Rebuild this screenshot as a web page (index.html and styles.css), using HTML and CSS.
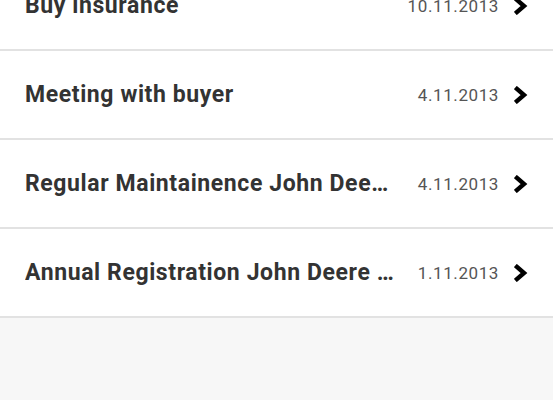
FILE: index.html
```html
<!doctype html>
<html lang="en-US">
<head>
    <meta name="viewport" content="width=device-width, initial-scale=1" charset="utf-8">
    <title>Tasks</title>
    <link rel="stylesheet" href="styles.css">
</head>
<body>
  <ul class="task-list">
    <li class="task">
      <span class="task-title">Buy insurance</span>
      <span class="task-date">10.11.2013</span>
      <svg class="chevron" viewBox="0 0 14 18"><path d="M3 3 L10 9 L3 15" /></svg>
    </li>
    <li class="task">
      <span class="task-title">Meeting with buyer</span>
      <span class="task-date">4.11.2013</span>
      <svg class="chevron" viewBox="0 0 14 18"><path d="M3 3 L10 9 L3 15" /></svg>
    </li>
    <li class="task">
      <span class="task-title">Regular Maintainence John Deere 6210R</span>
      <span class="task-date">4.11.2013</span>
      <svg class="chevron" viewBox="0 0 14 18"><path d="M3 3 L10 9 L3 15" /></svg>
    </li>
    <li class="task">
      <span class="task-title">Annual Registration John Deere 6210R</span>
      <span class="task-date">1.11.2013</span>
      <svg class="chevron" viewBox="0 0 14 18"><path d="M3 3 L10 9 L3 15" /></svg>
    </li>
  </ul>
</body>
</html>
```

FILE: styles.css
```css
:root {
  --font-face: Roboto, "Liberation Sans", Arial, sans-serif;
}

body {
  margin: 0;
  background-color: #f7f7f7;
  font-family: var(--font-face);
}

.task-list {
  list-style: none;
  margin: -38px 0 0 0;
  padding: 0;
}

.task {
  display: flex;
  align-items: center;
  height: 87px;
  padding: 0 25px;
  background-color: #fff;
  border-bottom: 2px solid #e2e2e2;
}

.task-title {
  flex: 1;
  min-width: 0;
  white-space: nowrap;
  overflow: hidden;
  text-overflow: ellipsis;
  font-size: 23px;
  letter-spacing: 0.6px;
  font-weight: 700;
  color: #333;
}

.task-date {
  margin-left: 22px;
  font-size: 17px;
  letter-spacing: 0.6px;
  color: #555;
}

.chevron {
  width: 14px;
  height: 18px;
  margin-left: 15px;
  flex-shrink: 0;
}

.chevron path {
  fill: none;
  stroke: #000;
  stroke-width: 4.4;
  stroke-linecap: square;
  stroke-linejoin: miter;
}
```
